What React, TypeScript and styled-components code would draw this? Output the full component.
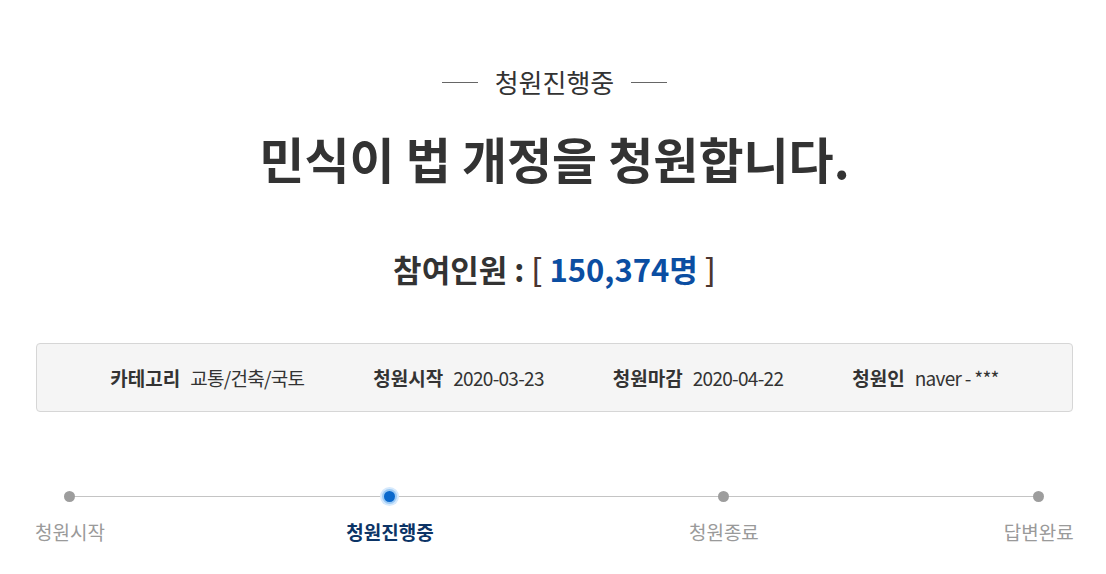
import React from "react";
import styled, { createGlobalStyle } from "styled-components";

const Global = createGlobalStyle`
  html, body { margin: 0; padding: 0; background: #fff; }
  body { font-family: "Noto Sans CJK KR", "Noto Sans", sans-serif; color: #333; }
`;

const Page = styled.div`
  width: 1037px;
  margin: 0 0 0 36px;
  padding-top: 64px;
  display: flex;
  flex-direction: column;
  align-items: center;
`;

const Status = styled.div`
  display: flex;
  align-items: center;
  gap: 17px;
  font-size: 26px;
  line-height: 36px;
  color: #333;
  &::before, &::after {
    content: "";
    width: 36px;
    height: 1px;
    background: #666;
  }
`;

const Heading = styled.h1`
  margin: 27px 0 0;
  font-size: 49px;
  line-height: 62px;
  font-weight: 700;
  color: #333;
`;

const Count = styled.h2`
  margin: 59px 0 0;
  font-size: 31px;
  line-height: 42px;
  font-weight: 700;
  color: #333;
`;

const Bracket = styled.span`
  color: #4a3530;
  font-weight: 500;
`;

const Number = styled.span`
  color: #0b4ea2;
`;

const InfoBox = styled.ul`
  margin: 53px 0 0;
  padding: 0;
  list-style: none;
  box-sizing: border-box;
  width: 1037px;
  height: 69px;
  border: 1px solid #d6d6d6;
  border-radius: 4px;
  background: #f5f5f5;
  display: flex;
  justify-content: center;
  align-items: center;
  gap: 69px;
`;

const InfoItem = styled.li`
  display: flex;
  align-items: baseline;
  gap: 10px;
  font-size: 19px;
  line-height: 26px;
  color: #333;
  letter-spacing: -0.7px;
`;

const InfoLabel = styled.strong`
  font-weight: 700;
  letter-spacing: 0;
`;

const Steps = styled.ol`
  position: relative;
  margin: 74px 0 0;
  padding: 0;
  list-style: none;
  width: 1037px;
  display: flex;
  &::before {
    content: "";
    position: absolute;
    left: 34px;
    width: 969px;
    top: 10px;
    height: 1px;
    background: #c4c4c4;
  }
`;

const Step = styled.li<{ $offset: number }>`
  position: relative;
  width: 70px;
  margin-left: ${(p) => p.$offset}px;
  display: flex;
  flex-direction: column;
  align-items: center;
  gap: 13px;
`;

const DotWrap = styled.div`
  width: 20px;
  height: 20px;
  display: flex;
  align-items: center;
  justify-content: center;
`;

const Dot = styled.span<{ $active?: boolean }>`
  width: 11px;
  height: 11px;
  border-radius: 50%;
  background: ${(p) => (p.$active ? "#0a68cc" : "#9d9d9d")};
  box-shadow: ${(p) =>
    p.$active ? "0 0 0 2px #9ccaf5, 0 0 0 4px #d6e9fc" : "none"};
`;

const StepLabel = styled.span<{ $active?: boolean }>`
  white-space: nowrap;
  font-size: 19px;
  line-height: 26px;
  font-weight: ${(p) => (p.$active ? 700 : 400)};
  color: ${(p) => (p.$active ? "#0c3466" : "#9a9a9a")};
`;

const info = [
  { label: "카테고리", value: "교통/건축/국토" },
  { label: "청원시작", value: "2020-03-23" },
  { label: "청원마감", value: "2020-04-22" },
  { label: "청원인", value: "naver - ***" },
];

const steps = [
  { label: "청원시작", offset: -1 },
  { label: "청원진행중", offset: 250, active: true },
  { label: "청원종료", offset: 264 },
  { label: "답변완료", offset: 245 },
];

export default function App() {
  return (
    <>
      <Global />
      <Page>
        <Status>청원진행중</Status>
        <Heading>민식이 법 개정을 청원합니다.</Heading>
        <Count>
          참여인원 : <Bracket>[</Bracket> <Number>150,374명</Number>{" "}
          <Bracket>]</Bracket>
        </Count>
        <InfoBox>
          {info.map((i) => (
            <InfoItem key={i.label}>
              <InfoLabel>{i.label}</InfoLabel>
              <span>{i.value}</span>
            </InfoItem>
          ))}
        </InfoBox>
        <Steps>
          {steps.map((s) => (
            <Step key={s.label} $offset={s.offset}>
              <DotWrap>
                <Dot $active={s.active} />
              </DotWrap>
              <StepLabel $active={s.active}>{s.label}</StepLabel>
            </Step>
          ))}
        </Steps>
      </Page>
    </>
  );
}
